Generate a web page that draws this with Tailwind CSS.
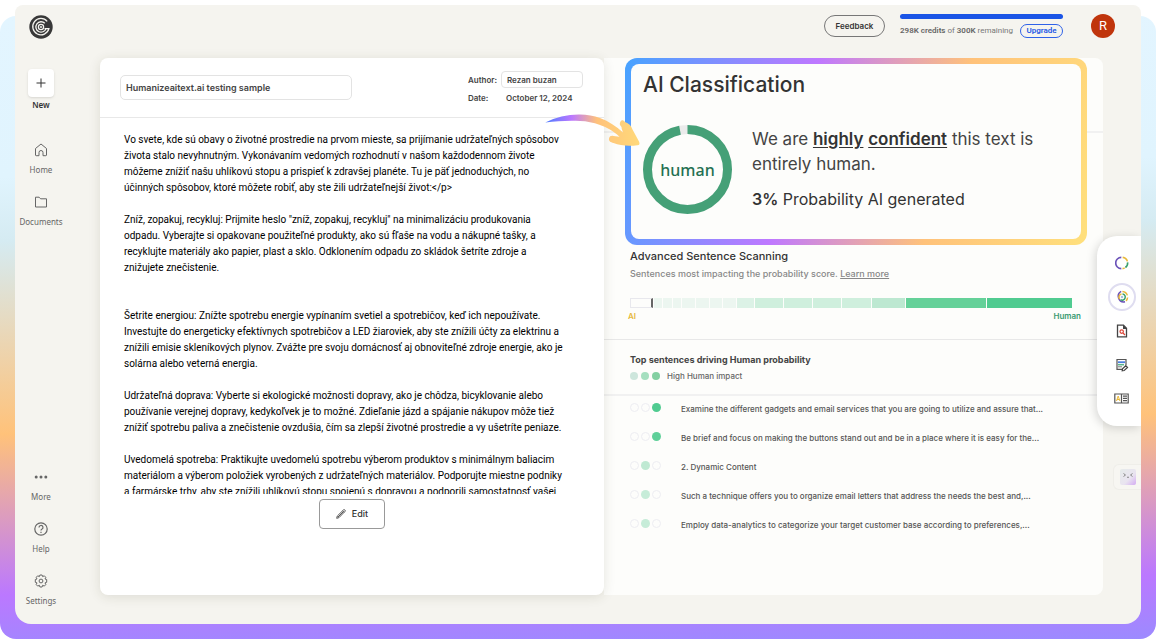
<!DOCTYPE html>
<html lang="en">
<head>
<meta charset="utf-8">
<meta name="viewport" content="width=device-width, initial-scale=1">
<title>AI Classification</title>
<script src="https://cdn.jsdelivr.net/npm/@tailwindcss/browser@4"></script>
</head>
<body class="flex h-screen min-h-[600px] flex-col bg-white pt-4 font-['Inter',sans-serif] text-[#333]">
<div class="flex min-h-0 flex-1 flex-col rounded-2xl bg-[linear-gradient(179deg,#e3f5ff_0%,#e0f4fe_25%,#d5ebf2_35%,#ffc27a_65%,#bb78ff_90%,#9c8aff_100%)] px-[15px] pb-[15px]">
<div class="relative -mt-[11px] flex min-h-0 flex-1 gap-[33px] rounded-t-lg rounded-b-2xl bg-[#f5f4ef]">

  <nav class="flex w-[52px] flex-col items-center justify-between pt-[10px] pb-[18px] font-['Noto_Sans',sans-serif] text-[8px] leading-[10px] text-[#666]">
    <div class="flex flex-col items-center">
      <a href="#" aria-label="Dashboard"><svg width="24" height="24" viewBox="0 0 24 24" fill="none"><circle cx="12" cy="12" r="11.700" fill="#383838"/><g stroke="#f5f4ef" stroke-width="1.300"><path d="M18.200 6.300A8.200 8.200 0 1 0 19.900 13.700H15.500"/><path d="M15.800 8.300A5.200 5.200 0 1 0 17 13.600"/><circle cx="12" cy="12" r="2.600"/></g><circle cx="12" cy="12" r="1" fill="#f5f4ef"/></svg></a>
      <button class="mt-[30px] flex flex-col items-center gap-[3px] font-semibold text-[#333]">
        <span class="flex h-7 w-[26px] items-center justify-center rounded-sm bg-white shadow"><svg width="10" height="10" viewBox="0 0 10 10" stroke="#333"><path d="M5 .5v9M.5 5h9"/></svg></span>New</button>
      <a href="#" class="mt-[33px] flex flex-col items-center gap-2"><svg width="14" height="14" viewBox="0 0 14 14" fill="none" stroke="#666" stroke-linejoin="round"><path d="M1.500 5.500 7 1l5.500 4.500V12a.7.7 0 0 1-.7.700H9V9.500a2 2 0 0 0-4 0v3.200H2.200a.7.7 0 0 1-.7-.7Z"/></svg>Home</a>
      <a href="#" class="mt-5 flex flex-col items-center gap-2"><svg width="14" height="14" viewBox="0 0 14 14" fill="none" stroke="#666" stroke-linejoin="round"><path d="M1.500 12V2.200h3.600l1.500 1.600h5.900V12Z"/></svg>Documents</a>
    </div>
    <div class="flex flex-col items-center gap-5">
      <button class="flex flex-col items-center gap-2"><svg width="14" height="14" viewBox="0 0 14 14" fill="#666"><circle cx="2.200" cy="7" r="1.500"/><circle cx="7" cy="7" r="1.500"/><circle cx="11.800" cy="7" r="1.500"/></svg>More</button>
      <a href="#" class="flex flex-col items-center gap-2"><svg width="14" height="14" viewBox="0 0 14 14" fill="none" stroke="#666" stroke-width="1.200"><circle cx="7" cy="7" r="6.200"/><path d="M5 5.500a2 2 0 1 1 2.800 1.800c-.6.300-.8.600-.8 1.300M7 9.700v1.200"/></svg>Help</a>
      <a href="#" class="flex flex-col items-center gap-2"><svg width="14" height="14" viewBox="0 0 14 14" fill="none" stroke="#666" stroke-linejoin="round"><circle cx="7" cy="7" r="1.900"/><path d="M5.900 1h2.200l.5 1.600 1.700-.8 1.500 1.500-.8 1.700 1.700.5v2.800l-1.700.6.800 1.700-1.500 1.500-1.700-.8L8.100 13H5.900l-.5-1.700-1.700.8-1.500-1.500.8-1.700-1.700-.6V5.500L3 5l-.8-1.700 1.500-1.500 1.700.8Z"/></svg>Settings</a>
    </div>
  </nav>

  <div class="flex min-w-0 flex-1 flex-col">
    <header class="flex h-[53px] shrink-0 justify-end pr-[26px]">
      <button class="mt-[10px] h-[22px] w-[61px] rounded-full border border-[#777] text-[8px] font-semibold">Feedback</button>
      <div class="mt-[9px] ml-[15px] w-[163px]">
        <div class="h-[5px] rounded-full bg-[#1b55e6]"></div>
        <div class="mt-[5px] flex items-center justify-between font-['Roboto',sans-serif] text-[8px] leading-[14px] whitespace-nowrap text-[#777]">
          <p><b class="font-semibold text-[#666]">298K credits</b> of <b class="font-semibold text-[#666]">300K</b> remaining</p>
          <a href="#" class="flex h-[14px] w-[43px] items-center justify-center rounded-full border border-[#2f62e8] font-semibold text-[#2458e6]">Upgrade</a>
        </div>
      </div>
      <button aria-label="Account" class="mt-[9px] ml-7 size-6 rounded-full bg-[#c0350c] font-['Roboto',sans-serif] text-[13px] text-white">R</button>
    </header>

    <main class="mr-[38px] mb-[29px] grid min-h-0 flex-1 grid-cols-[504fr_499fr]">
      <section class="z-10 flex min-h-0 min-w-0 flex-col rounded-lg bg-white shadow-[0_2px_12px_rgba(60,60,30,0.13)]">
        <div class="flex h-[60px] shrink-0 items-start justify-between border-b border-[#e8e8e8] pr-[21px] pl-5">
          <input aria-label="Document title" value="Humanizeaitext.ai testing sample" class="mt-[17px] h-[25px] w-[232px] rounded-[5px] border border-[#e3e3e3] px-[5px] text-[9px] font-semibold text-[#444]">
          <div class="mt-[13px] grid grid-cols-[33px_82px] items-center gap-y-[2px] text-[8px] leading-4 font-semibold text-[#444]">
            <label for="author">Author:</label>
            <input id="author" value="Rezan buzan" class="h-[17px] w-full rounded-[4px] border border-[#e3e3e3] px-[5px]">
            <span>Date:</span><span class="pl-[5px]">October 12, 2024</span>
          </div>
        </div>
        <div class="mt-[14px] min-h-0 flex-1 overflow-hidden pl-6 font-['Roboto',sans-serif] text-[10px] leading-4 whitespace-nowrap text-black">
          <p>Vo svete, kde sú obavy o životné prostredie na prvom mieste, sa prijímanie udržateľných spôsobov<br>života stalo nevyhnutným. Vykonávaním vedomých rozhodnutí v našom každodennom živote<br>môžeme znížiť našu uhlíkovú stopu a prispieť k zdravšej planéte. Tu je päť jednoduchých, no<br>účinných spôsobov, ktoré môžete robiť, aby ste žili udržateľnejší život:&lt;/p&gt;</p>
          <p class="mt-4">Zníž, zopakuj, recykluj: Prijmite heslo "zníž, zopakuj, recykluj" na minimalizáciu produkovania<br>odpadu. Vyberajte si opakovane použiteľné produkty, ako sú fľaše na vodu a nákupné tašky, a<br>recyklujte materiály ako papier, plast a sklo. Odklonením odpadu zo skládok šetríte zdroje a<br>znižujete znečistenie.</p>
          <p class="mt-8">Šetrite energiou: Znížte spotrebu energie vypínaním svetiel a spotrebičov, keď ich nepoužívate.<br>Investujte do energeticky efektívnych spotrebičov a LED žiaroviek, aby ste znížili účty za elektrinu a<br>znížili emisie skleníkových plynov. Zvážte pre svoju domácnosť aj obnoviteľné zdroje energie, ako je<br>solárna alebo veterná energia.</p>
          <p class="mt-4">Udržateľná doprava: Vyberte si ekologické možnosti dopravy, ako je chôdza, bicyklovanie alebo<br>používanie verejnej dopravy, kedykoľvek je to možné. Zdieľanie jázd a spájanie nákupov môže tiež<br>znížiť spotrebu paliva a znečistenie ovzdušia, čím sa zlepší životné prostredie a vy ušetríte peniaze.</p>
          <p class="mt-4">Uvedomelá spotreba: Praktikujte uvedomelú spotrebu výberom produktov s minimálnym baliacim<br>materiálom a výberom položiek vyrobených z udržateľných materiálov. Podporujte miestne podniky<br>a farmárske trhy, aby ste znížili uhlíkovú stopu spojenú s dopravou a podporili samostatnosť vašej</p>
        </div>
        <div class="flex h-[101px] shrink-0 items-start justify-center pt-[5px]">
          <button class="flex h-[30px] w-[66px] items-center justify-center gap-[6px] rounded-[4px] border border-[#999] text-[9px] font-medium"><svg width="10" height="10" viewBox="0 0 10 10" fill="none" stroke="#444" stroke-width=".9"><path d="M.7 9.300 1.300 7 7.600.8q.7-.5 1.300.2.700.7.100 1.400L2.900 8.700ZM6.700 1.800l1.500 1.500M2 8 7 3"/></svg>Edit</button>
        </div>
      </section>

      <section class="relative flex min-h-0 min-w-0 flex-col rounded-r-lg bg-[#fdfdfb]">
        <div class="absolute inset-x-0 top-[73px] border-t-2 border-[#f1f1f1]"></div>
        <div class="relative mr-4 ml-[21px] h-[187px] shrink-0 rounded-xl bg-[linear-gradient(105deg,#47a3ff_0%,#bf78ff_38%,#ffc27a_68%,#ffe07c_100%)] p-[6px]">
          <div class="flex h-full flex-col rounded-lg bg-[#fdfdfb] px-3 pt-px">
            <h1 class="text-[21px] leading-10 font-medium">AI Classification</h1>
            <div class="mt-5 flex gap-5">
              <div class="relative flex size-[89px] shrink-0 items-center justify-center">
                <svg class="absolute inset-0" width="89" height="89" viewBox="0 0 89 89" fill="none" stroke-width="9"><circle cx="44.500" cy="44.500" r="40" stroke="#ebebeb"/><circle cx="44.500" cy="44.500" r="40" stroke="#45a077" pathLength="100" stroke-dasharray="97 3" transform="rotate(-90 44.500 44.500)"/></svg>
                <span class="relative font-['Noto_Sans',sans-serif] text-[16px] leading-5 font-medium text-[#257052]">human</span>
              </div>
              <div class="pt-[2px]">
                <p class="text-[17px] leading-[25px] text-[#444]">We are <b class="font-semibold text-[#333] underline underline-offset-2">highly</b> <b class="font-semibold text-[#333] underline underline-offset-2">confident</b> this text is<br>entirely human.</p>
                <p class="mt-3 text-[16px] leading-5"><b class="font-semibold">3%</b> Probability AI generated</p>
              </div>
            </div>
          </div>
        </div>
        <svg class="absolute top-[54px] -left-[60px] z-20" width="98" height="36" viewBox="0 0 98 36" fill="none"><defs><linearGradient id="sweep"><stop stop-color="#4b7bff"/><stop offset=".28" stop-color="#bb78ff"/><stop offset=".55" stop-color="#ffc27a"/><stop offset="1" stop-color="#ffd97a"/></linearGradient></defs><path fill="url(#sweep)" d="M1.300 10.500C12 5 24 2.300 36 2.500c7 .2 14 1.200 20 3.400 9 3.400 16 8.300 23 14.500-.5-2-1.500-3.500-1.500-5.500-1.500-1.500-2.500-3-1-5.500 1.500-1.800 3-1 4.500.5 4 1.500 6 3.500 7.500 7.500l6.500 12c1 2 .5 3.800-1.500 3.800-8 1-17 .8-24-2.200-3-.8-5-2-4.500-4.500.5-2.500 2.500-3 4.500-2.500l6 .8C69 18.500 63 15.500 56 13c-7-2.500-13-3.800-20-4-12-.8-23 .3-34.700 1.500Z"/></svg>

        <div class="shrink-0 border-b border-[#e8e8e8] pr-[31px] pb-[15px] pl-[26px]">
          <h2 class="mt-[3px] text-[11px] leading-4 font-medium">Advanced Sentence Scanning</h2>
          <p class="mt-[2px] text-[9px] leading-4 font-medium text-[#888]">Sentences most impacting the probability score. <a href="#" class="underline">Learn more</a></p>
          <div class="mt-4 flex h-[10px] gap-px">
            <div class="grow-[60] basis-0 border border-r-2 border-[#e8e8ed] border-r-[#666]"></div>
            <div class="grow-[25] basis-0 bg-[#ecf6f0]"></div><div class="grow-[27] basis-0 bg-[#ecf6f0]"></div><div class="grow-[25] basis-0 bg-[#ecf6f0]"></div><div class="grow-[39] basis-0 bg-[#ecf6f0]"></div><div class="grow-[38] basis-0 bg-[#ecf6f0]"></div><div class="grow-[38] basis-0 bg-[#ecf6f0]"></div><div class="grow-[40] basis-0 bg-[#ecf6f0]"></div>
            <div class="grow-[50] basis-0 bg-[#dcf2e6]"></div><div class="grow-[85] basis-0 bg-[#cfefdd]"></div><div class="grow-[85] basis-0 bg-[#cfefdd]"></div><div class="grow-[86] basis-0 bg-[#cfefdd]"></div><div class="grow-[86] basis-0 bg-[#cfefdd]"></div><div class="grow-[99] basis-0 bg-[#bde8d1]"></div><div class="grow-[244] basis-0 bg-[#65d199]"></div><div class="grow-[257] basis-0 bg-[#50cb90]"></div>
          </div>
          <div class="-mr-[9px] -ml-[2px] flex justify-between text-[8px] leading-4 font-semibold"><span class="text-[#e6b93c]">AI</span><span class="text-[#3a9b72]">Human</span></div>
        </div>

        <div class="h-14 shrink-0 border-b-2 border-[#f1f1f1] pt-3 pl-[26px]">
          <h2 class="text-[9px] leading-4 font-bold text-[#444]">Top sentences driving Human probability</h2>
          <div class="flex items-center gap-[3px] text-[8px] leading-4 font-medium text-[#666]"><i class="size-2 rounded-full bg-[#cde6dc]"></i><i class="size-2 rounded-full bg-[#a5dfbf]"></i><i class="size-2 rounded-full bg-[#83d0a2]"></i><span class="ml-1">High Human impact</span></div>
        </div>

        <ul class="-mt-px flex flex-col pl-[26px] text-[8px] leading-[29px] font-medium whitespace-nowrap text-[#555]">
          <li class="flex gap-5"><span class="flex gap-[2px] pt-2"><i class="size-[9px] rounded-full border border-[#ededf2]"></i><i class="size-[9px] rounded-full border border-[#ededf2]"></i><i class="size-[9px] rounded-full bg-[#50cb90]"></i></span>Examine the different gadgets and email services that you are going to utilize and assure that...</li>
          <li class="flex gap-5"><span class="flex gap-[2px] pt-2"><i class="size-[9px] rounded-full border border-[#ededf2]"></i><i class="size-[9px] rounded-full border border-[#ededf2]"></i><i class="size-[9px] rounded-full bg-[#5fd099]"></i></span>Be brief and focus on making the buttons stand out and be in a place where it is easy for the...</li>
          <li class="flex gap-5"><span class="flex gap-[2px] pt-2"><i class="size-[9px] rounded-full border border-[#ededf2]"></i><i class="size-[9px] rounded-full bg-[#bfe9d2]"></i><i class="size-[9px] rounded-full border border-[#ededf2]"></i></span>2. Dynamic Content</li>
          <li class="flex gap-5"><span class="flex gap-[2px] pt-2"><i class="size-[9px] rounded-full border border-[#ededf2]"></i><i class="size-[9px] rounded-full bg-[#c6ecd8]"></i><i class="size-[9px] rounded-full border border-[#ededf2]"></i></span>Such a technique offers you to organize email letters that address the needs the best and,...</li>
          <li class="flex gap-5"><span class="flex gap-[2px] pt-2"><i class="size-[9px] rounded-full border border-[#ededf2]"></i><i class="size-[9px] rounded-full bg-[#c6ecd8]"></i><i class="size-[9px] rounded-full border border-[#ededf2]"></i></span>Employ data-analytics to categorize your target customer base according to preferences,...</li>
        </ul>
      </section>
    </main>
  </div>

  <aside class="absolute top-[231px] right-0 z-30 flex h-[190px] w-11 flex-col items-center rounded-l-[20px] bg-white pt-[13px] pl-[5px] shadow-[-2px_2px_10px_rgba(0,0,0,0.15)] [clip-path:inset(-20px_0_-20px_-20px)]">
    <button aria-label="Overview" class="flex size-7 items-center justify-center"><svg class="shrink-0" width="14" height="14" viewBox="0 0 14 14" fill="none" stroke-width="1.600"><path stroke="#6a51b8" d="M6.300 1.400A5.600 5.600 0 0 0 6.300 12.600"/><path stroke="#e9b93a" d="M7.700 1.400a5.600 5.600 0 0 1 4.700 4"/><path stroke="#3aa06c" d="M12.600 6.300a5.600 5.600 0 0 1-2.200 5.200"/><path stroke="#e9b93a" d="M9.700 11.900a5.600 5.600 0 0 1-2.200.700"/></svg></button>
    <button aria-label="AI scan" class="mt-[6px] flex size-7 items-center justify-center rounded-full border-2 border-[#dfddf0]"><svg class="shrink-0" width="14" height="14" viewBox="0 0 14 14" fill="none" stroke-width="1.500"><path stroke="#6a51b8" d="M6.200 1.400A5.600 5.600 0 0 0 10 11.800"/><path stroke="#e9b93a" d="M7.400 1.400a5.600 5.600 0 0 1 5 4M12.600 7.500a5.600 5.600 0 0 1-1.600 3.400"/><path stroke="#e9b93a" d="M6.500 4A3.100 3.100 0 0 0 4.700 9.100"/><path stroke="#3aa06c" d="M7.500 4a3.100 3.100 0 1 1-2 5.700"/><circle cx="7" cy="7" r=".8" stroke="#8fb0d8" stroke-width="1"/></svg></button>
    <button aria-label="Plagiarism" class="mt-[6px] flex size-7 items-center justify-center"><svg width="12" height="14" viewBox="0 0 12 14" fill="none"><path stroke="#444" stroke-width="1.300" d="M1.500 1.200h6l3 3v8.600h-9Z"/><path fill="#444" d="M7 1v4h4Z"/><circle cx="5.700" cy="7.600" r="1.700" stroke="#dc4638" stroke-width="1.200"/><path stroke="#dc4638" stroke-width="1.300" d="m7 9 2 2"/></svg></button>
    <button aria-label="Writing feedback" class="mt-[6px] flex size-7 items-center justify-center"><svg width="14" height="14" viewBox="0 0 14 14" fill="none"><path stroke="#555" stroke-width="1.200" d="M7 11.400H2V1.500h9V7"/><path stroke="#4c7fe0" stroke-width="1.800" d="M3 4.200h7"/><path stroke="#58b48a" stroke-width="1.500" d="M3 6.700h6"/><path stroke="#777" d="M3 8.800h4"/><path fill="#fff" stroke="#444" stroke-width="1.200" d="m7.200 12.800.3-2 3.300-3.100 1.700 1.700-3.300 3.100Z"/></svg></button>
    <button aria-label="Readability" class="mt-[5px] flex size-7 items-center justify-center"><svg width="15" height="11" viewBox="0 0 15 11" fill="none"><path stroke="#555" stroke-width="1.200" d="M.8 1h13.400v9H.8ZM7.500 1v9M9 3.200h4M9 5.400h4M9 7.600h4"/><path stroke="#e9b93a" d="M2.500 8 4.200 3 5.900 8M3 6.500h2.400"/></svg></button>
  </aside>
  <button aria-label="Assistant" class="absolute top-[459px] right-0 flex h-[26px] w-7 items-center justify-center rounded-l-md border border-r-0 border-[#efeee9] bg-[#f7f6f2]"><svg width="16" height="16" viewBox="0 0 16 16" fill="none"><defs><linearGradient id="face" x1="0" y1="0" x2="1" y2="1"><stop stop-color="#e6ebea"/><stop offset=".6" stop-color="#e9e4f0"/><stop offset="1" stop-color="#d3aaf2"/></linearGradient></defs><rect width="16" height="16" rx="2" fill="url(#face)"/><path stroke="#888" d="m3.500 4.500 2 1.500-2 1.500m9-3-2 1.500 2 1.500M7 8q1 1 2 0"/></svg></button>
</div>
</div>
</body>
</html>
